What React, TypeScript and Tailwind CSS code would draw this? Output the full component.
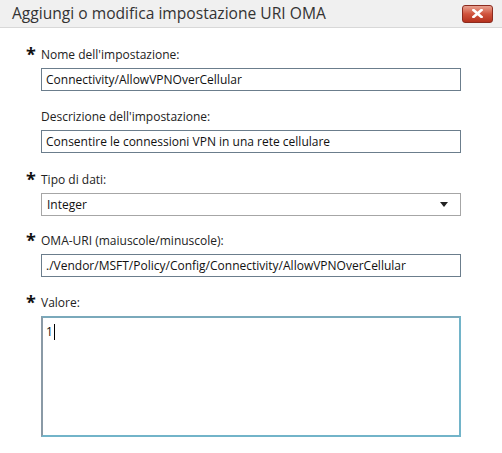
import React from "react";

const font = { fontFamily: '"Segoe UI", "Open Sans", "Noto Sans", sans-serif' };

function Star({ show }: { show: boolean }) {
  return (
    <span className="w-[14px] shrink-0 text-[18px] font-bold leading-none text-[#111] pt-[1px]">
      {show ? "*" : ""}
    </span>
  );
}

function Label({ text, req }: { text: string; req: boolean }) {
  return (
    <div className="flex items-start pl-[26px] h-[24px]">
      <Star show={req} />
      <span className="text-[12px] leading-[18px] text-[#222] pl-[1px] pt-[2px]">{text}</span>
    </div>
  );
}

function Input({ value }: { value: string }) {
  return (
    <div className="ml-[41px] w-[420px] h-[23px] border border-[#6b7d8c] flex items-center px-[4px] text-[12px] text-[#111] bg-white">
      {value}
    </div>
  );
}

export default function App() {
  return (
    <div className="w-[502px] h-[453px] bg-white relative overflow-hidden" style={font}>
      <div className="h-[28px] bg-[#f0f0f0] border-b border-[#d8d8d8] flex items-center justify-between pl-[12px] pr-[9px]">
        <span className="text-[15.6px] text-[#333] leading-none">Aggiungi o modifica impostazione URI OMA</span>
        <div className="w-[31px] h-[18px] rounded-[3px] border border-[#8b2b1f] bg-gradient-to-b from-[#e8a190] via-[#d0533d] to-[#b5311d] flex items-center justify-center">
          <svg width="11" height="9" viewBox="0 0 11 9">
            <path d="M1.5 1 L9.5 8 M9.5 1 L1.5 8" stroke="#fff" strokeWidth="2.6" strokeLinecap="square" />
          </svg>
        </div>
      </div>

      <div className="pt-[16px] flex flex-col">
        <Label text="Nome dell'impostazione:" req={true} />
        <Input value="Connectivity/AllowVPNOverCellular" />
        <div className="h-[15px]" />
        <Label text="Descrizione dell'impostazione:" req={false} />
        <Input value="Consentire le connessioni VPN in una rete cellulare" />
        <div className="h-[16px]" />
        <Label text="Tipo di dati:" req={true} />
        <div className="ml-[41px] w-[420px] h-[23px] border border-[#a6a6a6] flex items-center justify-between pl-[5px] pr-[12px] text-[12px] text-[#111] bg-white">
          <span>Integer</span>
          <svg width="8" height="5" viewBox="0 0 8 5">
            <path d="M0 0 H8 L4 5 Z" fill="#222" />
          </svg>
        </div>
        <div className="h-[14px]" />
        <Label text="OMA-URI (maiuscole/minuscole):" req={true} />
        <Input value="./Vendor/MSFT/Policy/Config/Connectivity/AllowVPNOverCellular" />
        <div className="h-[15px]" />
        <Label text="Valore:" req={true} />
        <div className="ml-[41px] w-[420px] h-[121px] border-2 border-[#72b4c9] border-l-[#8a9aa6] border-t-[#7aa9bb] bg-white px-[3px] pt-[6px] text-[12px] text-[#111]">
          <div className="flex items-center leading-[16px]">
            <span>1</span>
            <span className="inline-block w-[1px] h-[16px] bg-black ml-[1px]" />
          </div>
        </div>
      </div>
    </div>
  );
}
